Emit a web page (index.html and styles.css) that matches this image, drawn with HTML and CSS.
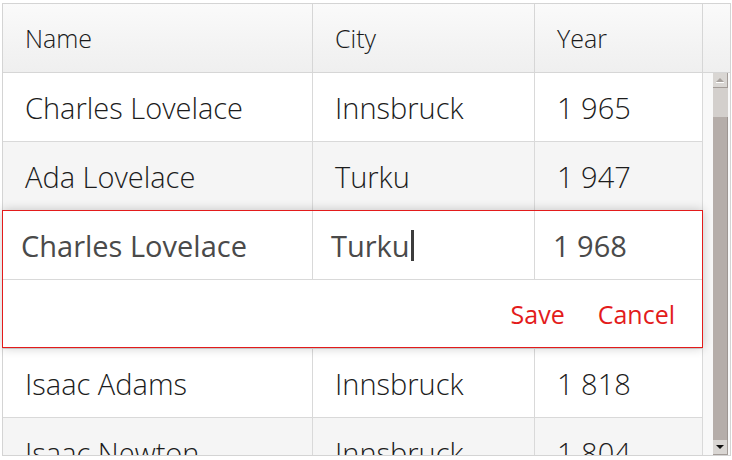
FILE: index.html
```html
<!DOCTYPE html>
<html>
<head>
<meta charset="utf-8">
<link rel="stylesheet" href="styles.css">
</head>
<body>
<div class="grid">
  <div class="header">
    <div class="hcell c-name">Name</div>
    <div class="hcell c-city">City</div>
    <div class="hcell c-year">Year</div>
    <div class="hcell c-pad"></div>
  </div>
  <div class="body">
    <div class="rows">
      <div class="row"><div class="cell c-name">Charles Lovelace</div><div class="cell c-city">Innsbruck</div><div class="cell c-year">1 965</div></div>
      <div class="row alt"><div class="cell c-name">Ada Lovelace</div><div class="cell c-city">Turku</div><div class="cell c-year">1 947</div></div>
      <div class="row"><div class="cell c-name">Charles Lovelace</div><div class="cell c-city">Turku</div><div class="cell c-year">1 968</div></div>
      <div class="row alt"><div class="cell c-name">Ada Newton</div><div class="cell c-city">Berlin</div><div class="cell c-year">1 902</div></div>
      <div class="row"><div class="cell c-name">Isaac Adams</div><div class="cell c-city">Innsbruck</div><div class="cell c-year">1 818</div></div>
      <div class="row alt"><div class="cell c-name">Isaac Newton</div><div class="cell c-city">Innsbruck</div><div class="cell c-year">1 804</div></div>
    </div>
    <div class="scroll">
      <div class="sb">
        <div class="sb-btn sb-up"><span class="tri-up"></span></div>
        <div class="sb-track"><div class="sb-thumb"></div></div>
        <div class="sb-btn sb-down"><span class="tri-down"></span></div>
      </div>
    </div>
  </div>
  <div class="editor">
    <div class="erow">
      <div class="ecell c-name">Charles Lovelace</div>
      <div class="ecell c-city">Turku<span class="caret"></span></div>
      <div class="ecell c-eyear">1 968</div>
    </div>
    <div class="ebuttons">
      <span class="ebtn">Save</span>
      <span class="ebtn">Cancel</span>
    </div>
  </div>
</div>
</body>
</html>
```

FILE: styles.css
```css
* { box-sizing: border-box; }

body {
  margin: 0;
  padding: 3px 0 0 2px;
  background: #ffffff;
  font-family: "Open Sans", "DejaVu Sans", sans-serif;
}

.grid {
  position: relative;
  width: 729px;
  height: 453px;
  border: 1px solid #d4d4d4;
  background: #ffffff;
}

.header {
  display: flex;
  height: 69px;
  border-bottom: 1px solid #d6d6d6;
  background: linear-gradient(#fafafa, #efefef);
}

.hcell {
  display: flex;
  align-items: center;
  padding-left: 22px;
  border-right: 1px solid #d6d6d6;
  font-size: 25px;
  font-weight: 300;
  color: #1a1a1a;
}

.c-name { width: 310px; flex: none; }
.c-city { width: 222px; flex: none; }
.c-year { width: 168px; flex: none; }
.c-pad { flex: 1; border-right: none; }

.body {
  display: flex;
  height: 382px;
}

.rows {
  width: 700px;
  flex: none;
  overflow: hidden;
}

.row {
  display: flex;
  height: 69px;
  border-bottom: 1px solid #d9d9d9;
  background: #ffffff;
}

.row.alt { background: #f5f5f5; }

.cell {
  display: flex;
  align-items: center;
  padding-left: 22px;
  border-right: 1px solid #d9d9d9;
  font-size: 29px;
  font-weight: 300;
  color: #1c1c1c;
  white-space: nowrap;
}

.scroll {
  flex: 1;
  background: #f8f8f8;
  padding-left: 10px;
}

.sb {
  width: 15px;
  height: 100%;
  display: flex;
  flex-direction: column;
}

.sb-btn {
  height: 15px;
  flex: none;
  display: flex;
  align-items: center;
  justify-content: center;
  background: #d9d6d3;
  border-right: 1px solid #a39c98;
  border-bottom: 1px solid #a39c98;
}

.sb-track {
  flex: 1;
  display: flex;
  flex-direction: column;
  padding-top: 29px;
  background: #d3cfcc;
}

.sb-thumb {
  flex: 1;
  background: #b5ada9;
  border-right: 1px solid #9d9591;
}

.tri-up {
  width: 0;
  height: 0;
  border-left: 4px solid transparent;
  border-right: 4px solid transparent;
  border-bottom: 4px solid #a8a29e;
  box-shadow: 0 1px 0 #ffffff;
}

.tri-down {
  width: 0;
  height: 0;
  border-left: 4px solid transparent;
  border-right: 4px solid transparent;
  border-top: 4px solid #111111;
}

.editor {
  position: absolute;
  left: -1px;
  top: 206px;
  width: 701px;
  height: 138px;
  border: 1px solid #e31b1b;
  background: #ffffff;
  box-shadow: 0 0 10px rgba(0, 0, 0, 0.2);
}

.erow {
  display: flex;
  height: 69px;
  border-bottom: 1px solid #d9d9d9;
}

.ecell {
  display: flex;
  align-items: center;
  padding-left: 18px;
  border-right: 1px solid #d9d9d9;
  font-size: 29px;
  font-weight: 400;
  color: #4a4a4a;
  white-space: nowrap;
}

.c-eyear { flex: 1; border-right: none; }

.caret {
  display: inline-block;
  width: 3px;
  height: 31px;
  margin-left: 1px;
  background: #3c3c3c;
}

.ebuttons {
  display: flex;
  justify-content: flex-end;
  align-items: center;
  gap: 33px;
  height: 67px;
  padding-right: 27px;
}

.ebtn {
  font-size: 25px;
  color: #e31b1b;
}
```
